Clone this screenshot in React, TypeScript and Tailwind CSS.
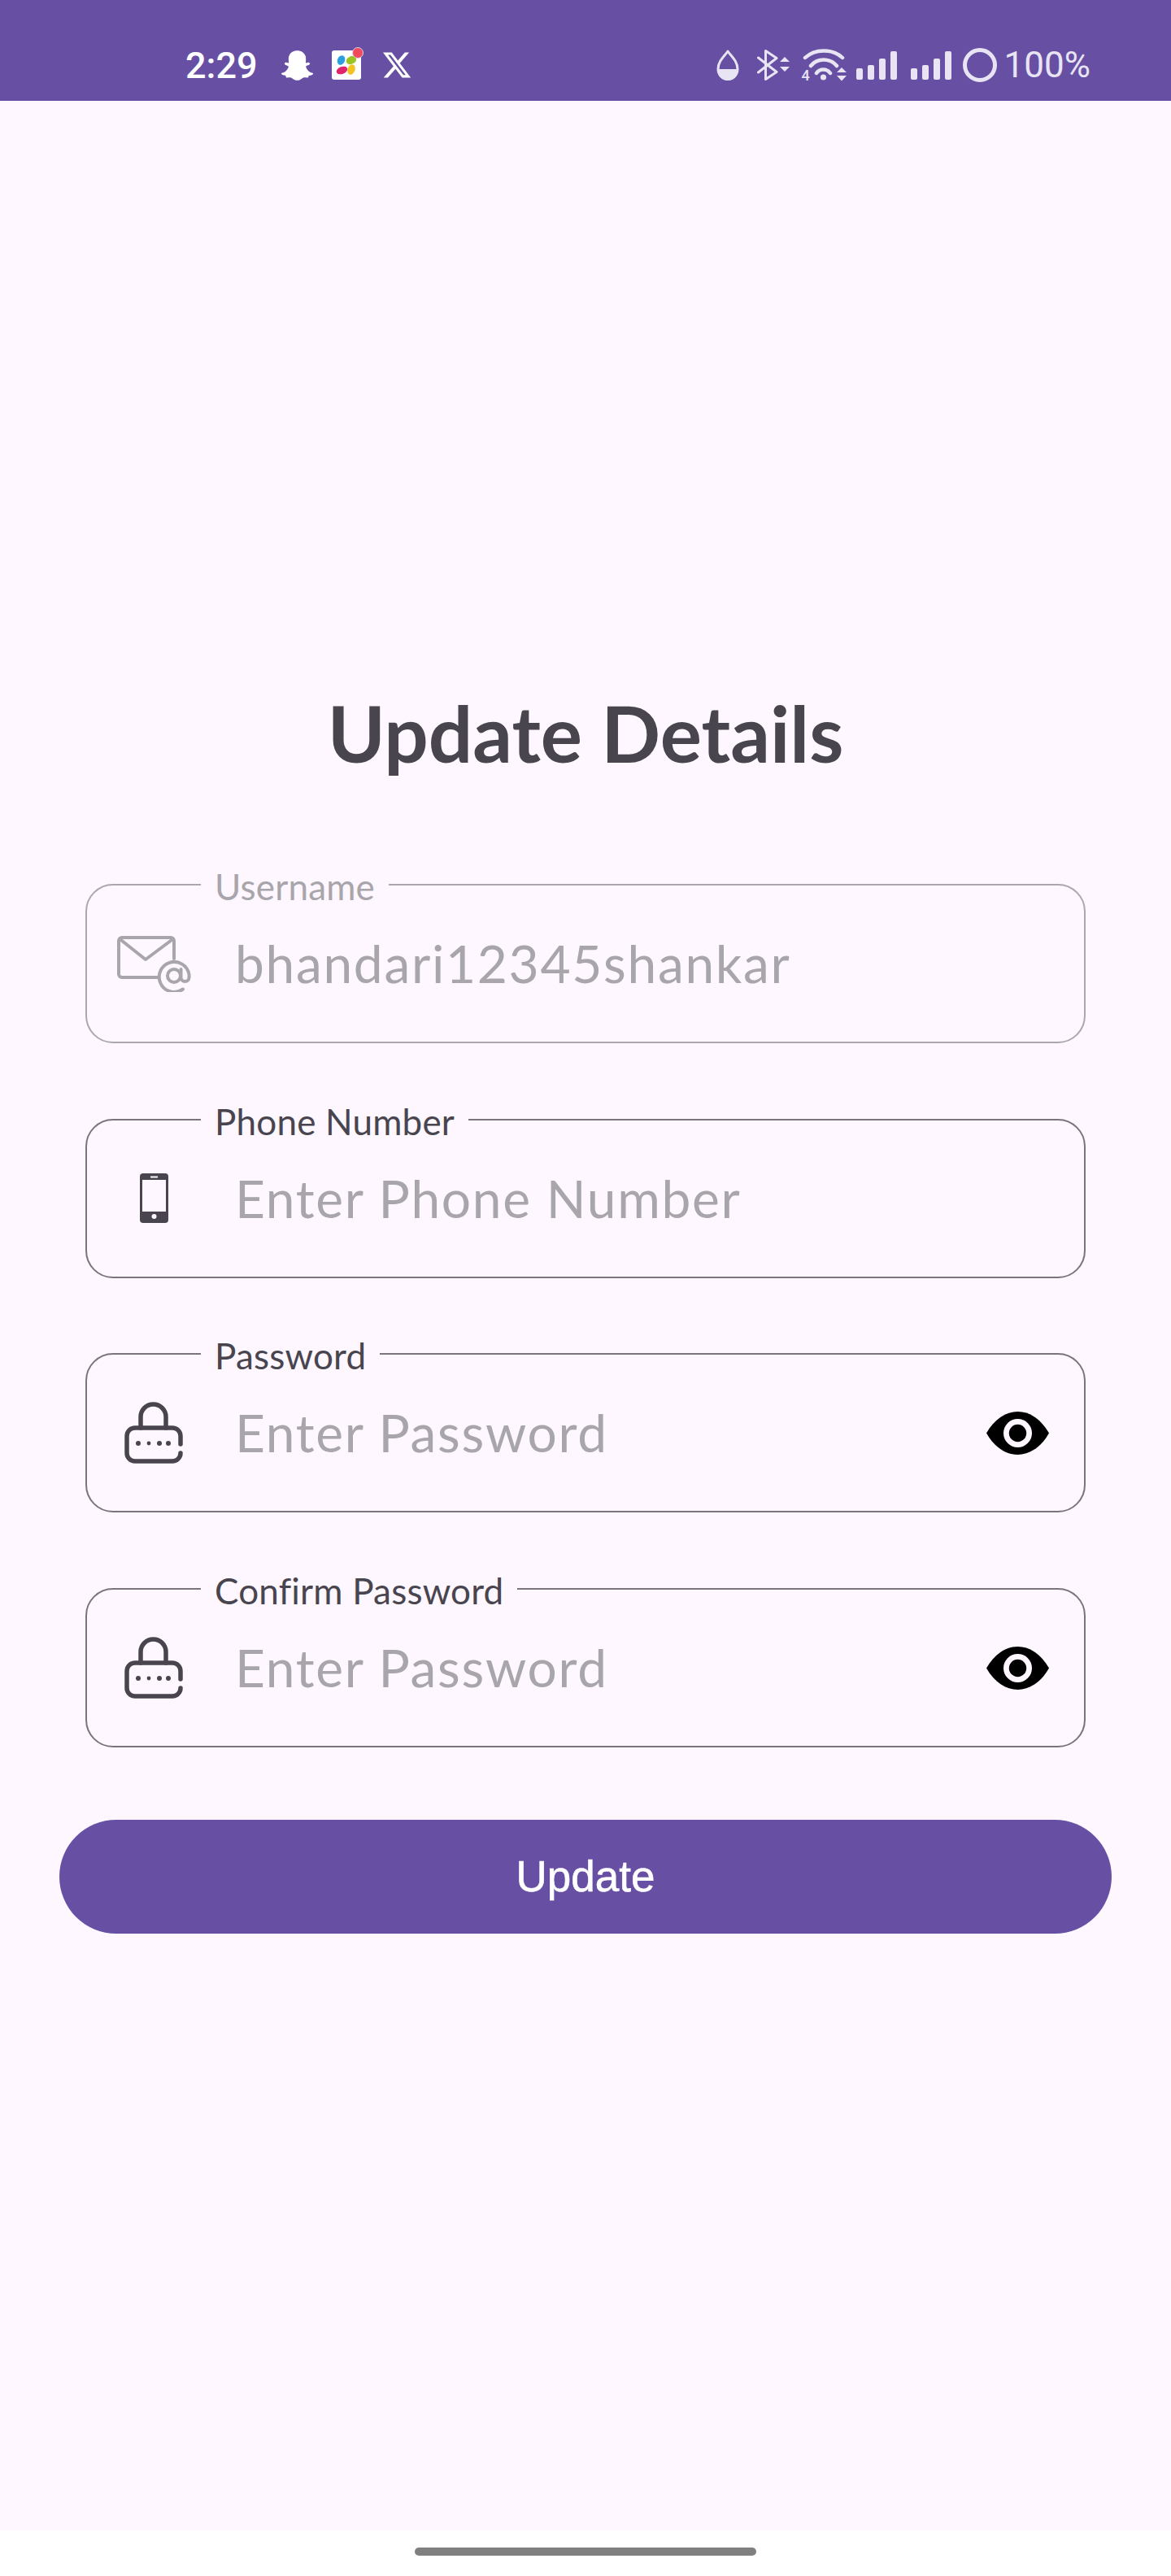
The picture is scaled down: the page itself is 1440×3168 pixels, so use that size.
import type { ReactNode } from 'react'
import { FaSnapchatGhost } from 'react-icons/fa'
import { FaXTwitter } from 'react-icons/fa6'

function Drop() {
  return (
    <svg width="28" height="38" viewBox="0 0 28 38" fill="none">
      <path d="M14 2 C10 8 2 14 2 24 C2 31 7.5 36.5 14 36.5 C20.5 36.5 26 31 26 24 C26 14 18 8 14 2Z" stroke="#E8E4F3" strokeWidth="3" strokeLinejoin="round" />
      <path d="M1 24 H27 C27 32 21 38 14 38 C7 38 1 32 1 24Z" fill="#E8E4F3" />
    </svg>
  )
}

function Bluetooth() {
  return (
    <svg width="40" height="38" viewBox="0 0 40 38" fill="none">
      <path d="M1.5 10 L24 27.5 L10.5 36.5 V1.5 L24 10.5 L1.5 28" stroke="#E8E4F3" strokeWidth="3" strokeLinejoin="round" strokeLinecap="round" />
      <path d="M28 15 L34 9 L40 15Z M28 21 L34 27 L40 21Z" fill="#E8E4F3" />
    </svg>
  )
}

function Wifi() {
  return (
    <div className="relative h-[40px] w-[55px]">
      <svg width="55" height="40" viewBox="0 0 55 40" fill="none">
        <g stroke="#E8E4F3" strokeWidth="4.5" strokeLinecap="round">
          <path d="M4 11 C16 -0.5 38 -0.5 50 11" />
          <path d="M11 21 C19 11 35 11 43 21" />
          <path d="M18 30 C22 24 31 24 35 30" />
        </g>
        <circle cx="26.5" cy="35" r="3.6" fill="#E8E4F3" />
        <path d="M43 29 L49 23 L55 29Z M43 33 L49 39.5 L55 33Z" fill="#E8E4F3" />
      </svg>
      <span className="absolute bottom-0 left-0 text-[18px] font-medium leading-[14px]">4</span>
    </div>
  )
}

function Signal() {
  return (
    <svg width="50" height="35" viewBox="0 0 50 35" fill="#E8E4F3">
      <rect x="0" y="21" width="8" height="14" rx="2" />
      <rect x="14" y="17" width="8" height="18" rx="2" />
      <rect x="28" y="9" width="8" height="26" rx="2" />
      <rect x="42" y="0" width="8" height="35" rx="2" />
    </svg>
  )
}

function AppTile() {
  return (
    <svg width="36" height="36" viewBox="0 0 36 36" className="overflow-visible">
      <rect width="36" height="36" rx="3" fill="#fff" />
      <ellipse cx="11.5" cy="12" rx="4.5" ry="6" fill="#2b9fe0" transform="rotate(25 11.5 12)" />
      <ellipse cx="24" cy="12" rx="4.8" ry="6.5" fill="#9cc422" transform="rotate(65 24 12)" />
      <ellipse cx="12.5" cy="24.5" rx="4.5" ry="7" fill="#e0246c" transform="rotate(70 12.5 24.5)" />
      <ellipse cx="24" cy="23.5" rx="4.5" ry="6.5" fill="#f3c321" transform="rotate(20 24 23.5)" />
      <circle cx="32" cy="3" r="6.5" fill="#f04a5c" stroke="#d9d2ea" strokeWidth="1" />
    </svg>
  )
}

function StatusBar() {
  return (
    <div className="flex h-[124px] shrink-0 items-center bg-[#6750A4] pl-[228px] pr-[99px] pt-[36px] font-['Roboto',sans-serif] text-[45px] leading-none">
      <span className="font-medium text-white">2:29</span>
      <FaSnapchatGhost className="ml-[29px] text-white" size={39} />
      <div className="ml-[23px] flex">
        <AppTile />
      </div>
      <FaXTwitter className="ml-[25px] text-white" size={38} />
      <div className="ml-auto flex items-center text-[44px] text-[#E8E4F3]">
        <Drop />
        <div className="ml-[22px]"><Bluetooth /></div>
        <div className="ml-[15px]"><Wifi /></div>
        <div className="ml-[12px]"><Signal /></div>
        <div className="ml-[17px]"><Signal /></div>
        <div className="ml-[14px] h-[42px] w-[42px] rounded-full border-[5.5px] border-[#E8E4F3]" />
        <span className="ml-[9px]">100%</span>
      </div>
    </div>
  )
}

function MailIcon() {
  return (
    <svg width="91" height="69" viewBox="0 0 91 69" fill="none" stroke="#A8A5AB" strokeWidth="4" strokeLinecap="round" strokeLinejoin="round">
      <path d="M70 28 V6 a4 4 0 0 0 -4 -4 H6 a4 4 0 0 0 -4 4 V47 a4 4 0 0 0 4 4 H50" />
      <path d="M3.5 4 L35 29 L68.5 4" />
      <circle cx="70" cy="49" r="8" />
      <path d="M81 65.5 A18.5 18.5 0 1 1 88.5 47.5 V51 a5 5 0 0 1 -10 0 V41" />
    </svg>
  )
}

function PhoneIcon() {
  return (
    <svg width="35" height="61" viewBox="0 0 35 61">
      <rect width="35" height="61" rx="4" fill="#49454F" />
      <rect x="3" y="8" width="29" height="39" fill="#FEF7FF" />
      <rect x="13" y="3.5" width="9" height="2" fill="#FEF7FF" />
      <circle cx="17.5" cy="53" r="3" fill="#FEF7FF" />
    </svg>
  )
}

function LockIcon() {
  return (
    <svg width="72" height="76" viewBox="0 0 72 76" fill="none" stroke="#49454F" strokeWidth="5.5" strokeLinecap="round">
      <path d="M69 52 V42 a10 10 0 0 0 -10 -10 H13 a10 10 0 0 0 -10 10 V63 a10 10 0 0 0 10 10 H59 a10 10 0 0 0 10 -10" />
      <path d="M20 32 V18.5 a15.5 15.5 0 0 1 31 0 V32" />
      <g fill="#49454F" stroke="none">
        <circle cx="17" cy="51" r="3" />
        <circle cx="30" cy="51" r="2.4" />
        <circle cx="43" cy="51" r="3" />
        <circle cx="54" cy="51" r="3" />
      </g>
    </svg>
  )
}

function EyeIcon() {
  return (
    <svg width="77" height="53" viewBox="0 0 77 53">
      <path d="M0 26.5 C10 9 24 0 38.5 0 S67 9 77 26.5 C67 44 53 53 38.5 53 S10 44 0 26.5Z" fill="#000" />
      <circle cx="38.5" cy="26.5" r="17.5" fill="#FEF7FF" />
      <circle cx="38.5" cy="26.5" r="10.7" fill="#000" />
    </svg>
  )
}

type FieldProps = {
  label: string
  value: string
  icon: ReactNode
  disabled?: boolean
  toggle?: boolean
}

function Field({ label, value, icon, disabled, toggle }: FieldProps) {
  return (
    <div
      className={`relative flex h-[196px] items-center rounded-[34px] border-2 ${
        disabled ? 'border-[#AAA7AD]' : 'border-[#79747E]'
      }`}
    >
      <span
        className={`absolute left-[140px] top-[-24px] bg-[#FEF7FF] px-[17px] text-[44px] leading-[50px] tracking-[0.2px] ${
          disabled ? 'text-[#A8A5AB]' : 'text-[#49454F]'
        }`}
      >
        {label}
      </span>
      <div className="flex w-[164px] shrink-0 justify-center">{icon}</div>
      <span className="ml-[18px] text-[64px] leading-none tracking-[1.7px] text-[#A8A5AB]">{value}</span>
      {toggle && (
        <div className="ml-auto mr-[43px] flex">
          <EyeIcon />
        </div>
      )}
    </div>
  )
}

export default function App() {
  return (
    <div className="flex h-screen flex-col bg-[#FEF7FF] font-['Lato',sans-serif]">
      <StatusBar />
      <main className="flex flex-1 flex-col px-[105px] pt-[719px]">
        <h1 className="mb-[128px] text-center text-[96px] font-bold leading-[116px] text-[#49454F]">Update Details</h1>
        <div className="flex flex-col gap-[92.7px]">
          <Field label="Username" value="bhandari12345shankar" icon={<MailIcon />} disabled />
          <Field label="Phone Number" value="Enter Phone Number" icon={<PhoneIcon />} />
          <Field label="Password" value="Enter Password" icon={<LockIcon />} toggle />
          <Field label="Confirm Password" value="Enter Password" icon={<LockIcon />} toggle />
        </div>
        <button className="mx-[-32px] mt-[89px] h-[140px] rounded-full bg-[#6750A4] font-['Liberation_Sans',sans-serif] text-[53px] text-white [-webkit-text-stroke:0.6px_white]">
          Update
        </button>
      </main>
      <div className="flex h-[56px] shrink-0 justify-center bg-white pt-[21px]">
        <div className="h-[10px] w-[420px] rounded-full bg-[#808080]" />
      </div>
    </div>
  )
}
